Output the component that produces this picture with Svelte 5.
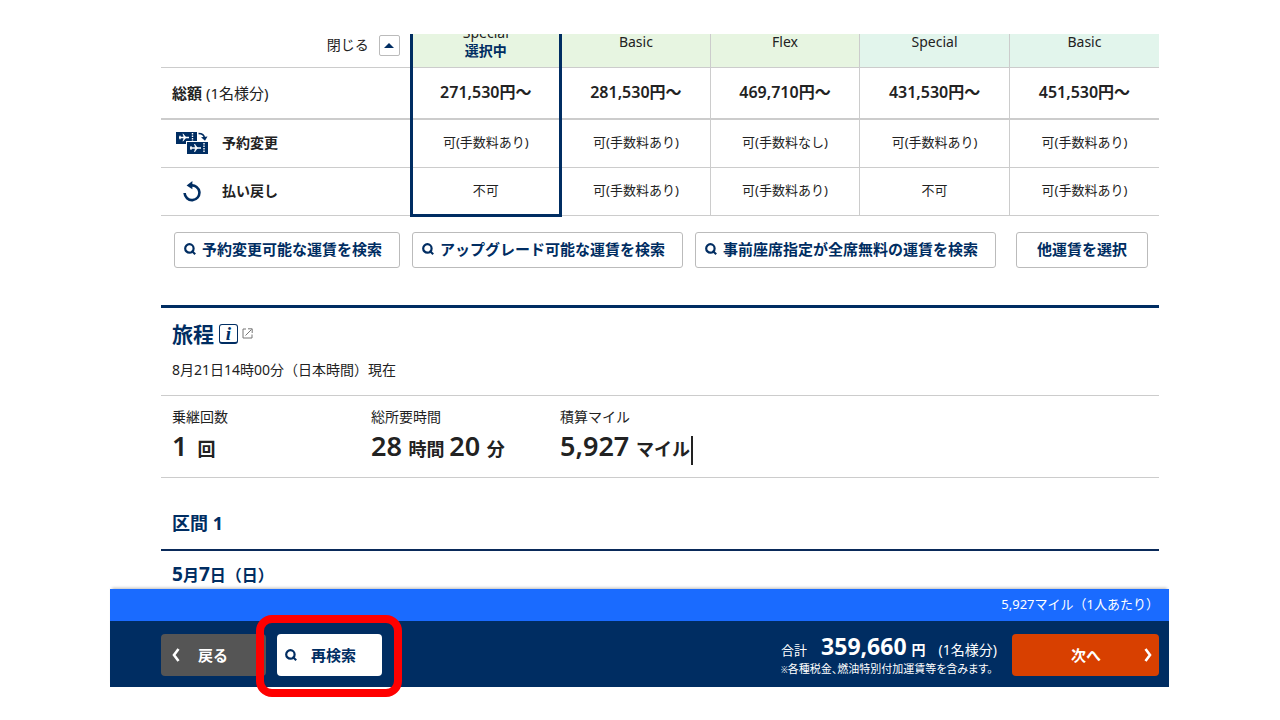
<script lang="ts">
  type Fare = {
    brand: string
    tone: 'green' | 'mint'
    price: string
    change: string
    refund: string
    selected?: boolean
  }

  const fares: Fare[] = [
    { brand: 'Special', tone: 'green', price: '271,530', change: '可(手数料あり)', refund: '不可', selected: true },
    { brand: 'Basic', tone: 'green', price: '281,530', change: '可(手数料あり)', refund: '可(手数料あり)' },
    { brand: 'Flex', tone: 'green', price: '469,710', change: '可(手数料なし)', refund: '可(手数料あり)' },
    { brand: 'Special', tone: 'mint', price: '431,530', change: '可(手数料あり)', refund: '不可' },
    { brand: 'Basic', tone: 'mint', price: '451,530', change: '可(手数料あり)', refund: '可(手数料あり)' },
  ]

  const searches = [
    '予約変更可能な運賃を検索',
    'アップグレード可能な運賃を検索',
    '事前座席指定が全席無料の運賃を検索',
  ]
</script>

{#snippet searchIcon()}
  <svg class="glass" viewBox="0 0 12 12" aria-hidden="true">
    <circle cx="5.4" cy="5.4" r="4.2" />
    <path d="M7.6 7.8 L11.2 11.2" />
  </svg>
{/snippet}

<div class="page">
  <main>
    <table>
      <colgroup>
        <col class="label-col" />
        {#each fares as _}
          <col />
        {/each}
      </colgroup>
      <thead>
        <tr>
          <td class="toggle">
            <label for="fold">閉じる</label>
            <button id="fold" type="button">
              <svg viewBox="0 0 10 5" aria-hidden="true"><path d="M0 5 L5 0 L10 5 Z" /></svg>
            </button>
          </td>
          {#each fares as f}
            <th scope="col" class={f.tone} class:selected={f.selected}>
              {f.brand}
              {#if f.selected}<strong>選択中</strong>{/if}
            </th>
          {/each}
        </tr>
      </thead>
      <tbody>
        <tr class="total">
          <th scope="row"><b>総額</b> (1名様分)</th>
          {#each fares as f}
            <td class:selected={f.selected}>{f.price}円～</td>
          {/each}
        </tr>
        <tr>
          <th scope="row">
            <div class="rule">
              <svg class="tickets" viewBox="0 0 32 22" aria-hidden="true">
                <path class="fill" d="M0 0 H21 V9 H10 V12 H0 Z M11 10 H32 V22 H11 Z" />
                <path class="plane" d="M3 5.5 H13 M4 3.8 V7.2 M14 16 H25 M15 14.3 V17.7" />
                <path class="wings" d="M7 1.8 L10 5.5 L7 9.2 L8 5.5 Z M18.5 12 L21.5 16 L18.5 20 L19.5 16 Z" />
                <path class="dots" d="M16.5 1 V9 M28 11 V21" />
                <path class="arc" d="M22.5 1.5 Q28 1.5 28.5 6" />
                <path class="fill" d="M25 5.2 L31.5 4.6 L29 8.8 Z" />
              </svg>
              <b>予約変更</b>
            </div>
          </th>
          {#each fares as f}
            <td class:selected={f.selected}>{f.change}</td>
          {/each}
        </tr>
        <tr>
          <th scope="row">
            <div class="rule">
              <svg class="refund" viewBox="0 0 18 21" aria-hidden="true">
                <path class="ring" d="M1.6 12 A7.4 7.4 0 1 0 8 4.4" />
                <path class="fill" d="M3.6 4.4 L9.4 0 V8.2 Z" />
              </svg>
              <b>払い戻し</b>
            </div>
          </th>
          {#each fares as f}
            <td class:selected={f.selected}>{f.refund}</td>
          {/each}
        </tr>
      </tbody>
    </table>

    <div class="searches">
      {#each searches as s}
        <button type="button">{@render searchIcon()}{s}</button>
      {/each}
      <button type="button" class="other">他運賃を選択</button>
    </div>

    <section class="trip">
      <h2>
        旅程
        <a href="#info" aria-label="旅程">
          <span class="info">i</span>
          <svg class="ext" viewBox="0 0 11 11" aria-hidden="true">
            <path d="M4 1 H1 V10 H10 V6.5 M3.5 7.5 L9.5 1.5 M6 0.8 H10.2 V5" />
          </svg>
        </a>
      </h2>
      <p class="asof">8月21日14時00分（日本時間）現在</p>

      <dl>
        <div>
          <dt>乗継回数</dt>
          <dd><span class="num">1</span><span class="count">回</span></dd>
        </div>
        <div>
          <dt>総所要時間</dt>
          <dd><span class="num">28</span> 時間 <span class="num">20</span> 分</dd>
        </div>
        <div>
          <dt>積算マイル</dt>
          <dd><span class="num">5,927</span> マイル<span class="caret"></span></dd>
        </div>
      </dl>

      <h3>区間 1</h3>
      <p class="date"><span>5</span>月<span>7</span>日（日）</p>
    </section>
  </main>

  <footer>
    <div class="miles">5,927マイル（1人あたり）</div>
    <div class="actions">
      <button type="button" class="back">
        <svg class="chev" viewBox="0 0 8 14" aria-hidden="true"><path d="M6.5 1 L2 7 L6.5 13" /></svg>
        戻る
      </button>
      <div class="marked">
        <button type="button" class="again">{@render searchIcon()}再検索</button>
        <span class="mark"></span>
      </div>
      <div class="sum">
        <p class="amount">合計<strong>359,660</strong><b>円</b><span>(1名様分)</span></p>
        <p class="note"><small>※</small>各種税金、燃油特別付加運賃等を含みます。</p>
      </div>
      <button type="button" class="next">
        次へ
        <svg class="chev" viewBox="0 0 8 14" aria-hidden="true"><path d="M1.5 1 L6 7 L1.5 13" /></svg>
      </button>
    </div>
  </footer>
</div>

<style>
  :global(body) {
    background: #fff;
  }
  .page {
    --navy: #002d62;
    box-sizing: border-box;
    min-height: 100vh;
    padding: 34px 111px 33px 110px;
    color: #222;
    font-family: 'Noto Sans', 'Noto Sans CJK JP', sans-serif;
    font-size: 14px;
    line-height: 20px;
  }
  main {
    overflow: hidden;
    padding: 0 10px 0 51px;
  }
  p,
  h2,
  h3,
  dl,
  dd {
    margin: 0;
  }
  button {
    box-sizing: border-box;
    font: inherit;
    cursor: pointer;
  }

  table {
    width: 100%;
    margin-top: -18px;
    table-layout: fixed;
    border-collapse: collapse;
  }
  .label-col {
    width: 250px;
  }
  th,
  td {
    box-sizing: border-box;
    height: 48px;
    padding: 0;
    border-bottom: 1px solid #ccc;
    font-weight: 400;
    text-align: center;
  }
  td + td,
  th + td,
  thead th {
    border-left: 1px solid #ccc;
  }
  tbody td {
    font-size: 13px;
    padding-bottom: 2px;
  }
  th[scope='row'] {
    padding-left: 11px;
    text-align: left;
  }
  thead td,
  thead th {
    height: 51px;
    line-height: 18px;
  }
  thead th {
    padding-top: 2px;
  }
  .green {
    background: #e7f5e1;
  }
  .mint {
    background: #e2f5ec;
  }
  thead strong {
    display: block;
    color: var(--navy);
  }
  th.selected,
  td.selected {
    border-left: 3px solid var(--navy);
    border-right: 3px solid var(--navy);
  }
  tbody tr:last-child .selected {
    border-bottom: 3px solid var(--navy);
  }
  .toggle {
    padding: 9px 10px 0 0;
    text-align: right;
  }
  .toggle label {
    margin-right: 6px;
  }
  .toggle button {
    width: 21px;
    height: 21px;
    padding: 0;
    border: 1px solid #bbb;
    border-radius: 2px;
    background: #fff;
    vertical-align: middle;
  }
  .toggle svg {
    display: block;
    width: 10px;
    margin: auto;
    fill: var(--navy);
  }
  .total th,
  .total td {
    height: 52px;
    border-bottom: 2px solid #ccc;
  }
  .total th {
    font-size: 15px;
  }
  .total td {
    font-size: 16px;
    font-weight: 600;
  }
  .rule {
    display: grid;
    grid-template-columns: 40px 1fr;
    align-items: center;
    column-gap: 10px;
  }
  .rule svg {
    justify-self: center;
  }
  .tickets {
    width: 32px;
    height: 22px;
  }
  .refund {
    width: 18px;
    height: 21px;
  }
  .fill {
    fill: var(--navy);
  }
  .plane,
  .dots {
    fill: none;
    stroke: #fff;
    stroke-width: 1.4;
  }
  .wings {
    fill: #fff;
    stroke: #fff;
    stroke-width: 0.6;
  }
  .dots {
    stroke-dasharray: 1.5 1;
  }
  .arc {
    fill: none;
    stroke: var(--navy);
    stroke-width: 1.6;
  }
  .ring {
    fill: none;
    stroke: var(--navy);
    stroke-width: 2.6;
  }

  .glass {
    width: 12px;
    height: 12px;
    fill: none;
    stroke: var(--navy);
    stroke-width: 2.2;
  }
  .searches {
    display: flex;
    gap: 12px;
    padding: 15px 11px 37px 13px;
  }
  .searches button {
    display: flex;
    align-items: center;
    gap: 6px;
    height: 36px;
    padding: 0 17px 2px 9px;
    border: 1px solid #bbb;
    border-radius: 3px;
    background: #fff;
    color: var(--navy);
    font-size: 15px;
    font-weight: 700;
    white-space: nowrap;
  }
  .searches .other {
    margin-left: auto;
    padding: 0 20px 2px;
  }

  .trip {
    border-top: 3px solid var(--navy);
  }
  h2 {
    display: flex;
    align-items: center;
    gap: 5px;
    padding: 10px 11px 0;
    color: var(--navy);
    font-size: 21px;
    line-height: 32px;
  }
  h2 a {
    display: flex;
    align-items: center;
    gap: 4px;
    color: inherit;
    text-decoration: none;
  }
  .info {
    box-sizing: border-box;
    width: 19px;
    height: 20px;
    border: 1px solid var(--navy);
    border-bottom-width: 2px;
    border-radius: 3px;
    font: italic bold 19px/17px 'Liberation Serif', serif;
    text-align: center;
  }
  .ext {
    width: 11px;
    height: 11px;
    fill: none;
    stroke: #777;
  }
  .asof {
    padding: 10px 11px 15px;
    border-bottom: 1px solid #ccc;
  }
  dl {
    display: grid;
    grid-template-columns: 199px 189px 1fr;
    padding: 11px 11px 13px;
    border-bottom: 1px solid #ccc;
  }
  dd {
    height: 37px;
    font-size: 18px;
    font-weight: 700;
    line-height: 38px;
  }
  .num {
    margin-right: 2px;
    font-size: 27px;
    font-weight: 600;
  }
  .count {
    margin-left: 8px;
  }
  .caret {
    display: inline-block;
    width: 2px;
    height: 29px;
    margin: -4px 0 -4px 1px;
    background: #222;
    vertical-align: middle;
  }
  h3 {
    padding: 30px 11px 11px;
    border-bottom: 2px solid #0a2a5a;
    color: var(--navy);
    font-size: 18px;
    line-height: 30px;
  }
  .date {
    height: 38px;
    padding-left: 11px;
    color: var(--navy);
    font-size: 16px;
    font-weight: 700;
    line-height: 46px;
  }
  .date span {
    font-size: 19px;
  }

  footer {
    position: relative;
    box-shadow: 0 -3px 3px -2px #bbb;
    color: #fff;
  }
  .miles {
    padding: 5px 10px 7px;
    background: #1a6bff;
    font-size: 13px;
    text-align: right;
  }
  .actions {
    display: flex;
    align-items: center;
    padding: 13px 10px 10px 51px;
    background: var(--navy);
  }
  .actions button {
    display: flex;
    align-items: center;
    height: 42px;
    border: none;
    border-radius: 4px;
    font-size: 15px;
    font-weight: 700;
  }
  .chev {
    width: 8px;
    height: 14px;
    fill: none;
    stroke: #fff;
    stroke-width: 2.6;
  }
  .actions .back {
    gap: 18px;
    width: 105px;
    padding: 0 11px;
    background: #555;
    color: #fff;
  }
  .marked {
    position: relative;
    margin-left: 11px;
  }
  .actions .again {
    gap: 14px;
    width: 105px;
    padding: 0 8px;
    background: #fff;
    color: var(--navy);
  }
  .mark {
    position: absolute;
    inset: -19px -20px -21px -21px;
    border: 8px solid #f00;
    border-radius: 16px;
    pointer-events: none;
  }
  .sum {
    margin-left: auto;
    margin-right: 15px;
    white-space: nowrap;
  }
  .amount {
    display: flex;
    align-items: baseline;
    font-size: 13px;
    line-height: 24px;
  }
  .amount strong {
    margin: 0 5px 0 14px;
    font-size: 23px;
  }
  .amount b {
    font-size: 14px;
  }
  .amount span {
    margin-left: 13px;
    font-size: 14px;
  }
  .note {
    font-size: 11px;
    line-height: 14px;
    font-feature-settings: 'palt';
  }
  .note small {
    font-size: 8px;
  }
  .actions .next {
    justify-content: flex-end;
    gap: 43px;
    width: 147px;
    padding: 0 7px;
    background: #d84000;
    color: #fff;
  }
</style>
